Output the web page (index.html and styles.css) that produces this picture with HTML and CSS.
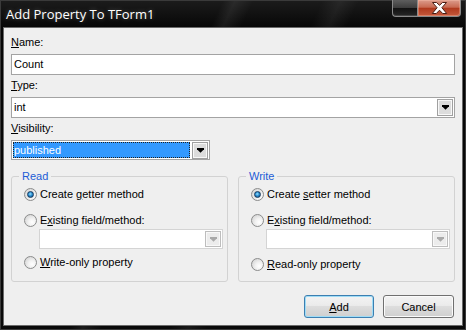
FILE: index.html
```html
<!DOCTYPE html>
<html lang="en">
<head>
  <meta charset="UTF-8">
  <title>Add Property To TForm1</title>
  <link rel="stylesheet" href="styles.css">
</head>
<body>
  <div class="window">
    <div class="titlebar">
      <span class="title">Add Property To TForm1</span>
      <div class="caption">
        <span class="cap-btn cap-min"></span>
        <span class="cap-btn cap-close">
          <svg width="17" height="12" viewBox="0 0 17 12"><path d="M1.5 0.5h4l3 2.8 3-2.8h4l-4.6 5.2 4.8 5.8h-4l-3.2-3.3-3.2 3.3h-4l4.8-5.8z" fill="#fff" stroke="#4a1e14" stroke-width="1"/></svg>
        </span>
      </div>
    </div>

    <div class="client">
      <label class="field-label first"><u>N</u>ame:</label>
      <div class="edit">Count</div>

      <label class="field-label"><u>T</u>ype:</label>
      <div class="combo">
        <span class="combo-text">int</span>
        <span class="drop-btn"><svg width="7" height="5" viewBox="0 0 7 5"><path d="M0 0h7v1.2l-3.5 3.5-3.5-3.5z" fill="#000"/></svg></span>
      </div>

      <label class="field-label"><u>V</u>isibility:</label>
      <div class="combo combo-vis">
        <span class="combo-text selected">published</span>
        <span class="drop-btn"><svg width="7" height="5" viewBox="0 0 7 5"><path d="M0 0h7v1.2l-3.5 3.5-3.5-3.5z" fill="#000"/></svg></span>
      </div>

      <div class="groups">
        <fieldset class="group">
          <legend>Read</legend>
          <div class="option checked"><span class="radio"></span><span>Create <u>g</u>etter method</span></div>
          <div class="option spaced"><span class="radio"></span><span>E<u>x</u>isting field/method:</span></div>
          <div class="combo combo-disabled">
            <span class="combo-text"></span>
            <span class="drop-btn"><svg width="7" height="5" viewBox="0 0 7 5"><path d="M0 0h7v1.2l-3.5 3.5-3.5-3.5z" fill="#a9a9a9"/></svg></span>
          </div>
          <div class="option last"><span class="radio"></span><span><u>W</u>rite-only property</span></div>
        </fieldset>

        <fieldset class="group">
          <legend>Write</legend>
          <div class="option checked"><span class="radio"></span><span>Create <u>s</u>etter method</span></div>
          <div class="option spaced"><span class="radio"></span><span>E<u>x</u>isting field/method:</span></div>
          <div class="combo combo-disabled">
            <span class="combo-text"></span>
            <span class="drop-btn"><svg width="7" height="5" viewBox="0 0 7 5"><path d="M0 0h7v1.2l-3.5 3.5-3.5-3.5z" fill="#a9a9a9"/></svg></span>
          </div>
          <div class="option last lower"><span class="radio"></span><span><u>R</u>ead-only property</span></div>
        </fieldset>
      </div>

      <div class="buttons">
        <button class="btn btn-default"><u>A</u>dd</button>
        <button class="btn btn-cancel">Cancel</button>
      </div>
    </div>
  </div>
</body>
</html>
```

FILE: styles.css
```css
body{
  margin: 0;
  background: #fff;
}
.window{
  width: 466px;
  height: 330px;
  box-sizing: border-box;
  padding: 0 3px 4px;
  display: flex;
  flex-direction: column;
  background:
    linear-gradient(115deg, transparent 36%, rgba(255,255,255,0.07) 38%, transparent 41%),
    linear-gradient(115deg, transparent 52%, rgba(255,255,255,0.06) 55%, transparent 58%),
    linear-gradient(#1c1c1c, #050505 30px, #0a0a0a);
  box-shadow: inset 0 0 0 1px #3a3a3a;
  font-family: "Liberation Sans", Arial, sans-serif;
  font-size: 11px;
  color: #000;
}
.titlebar{
  height: 27px;
  flex: none;
  display: flex;
  justify-content: space-between;
  align-items: flex-start;
}
.title{
  font-family: "Open Sans", "Noto Sans", sans-serif;
  font-size: 13px;
  line-height: 18px;
  padding: 5px 0 0 3px;
  color: #fff;
  text-shadow: 0 0 5px rgba(255,255,255,0.3);
}
.caption{
  display: flex;
  margin-right: 2px;
}
.cap-btn{
  height: 17px;
  box-sizing: border-box;
  border: 1px solid #8a8a8a;
  border-top: none;
}
.cap-min{
  width: 25px;
  border-right: none;
  border-radius: 0 0 0 4px;
  background: linear-gradient(#5e5e5e, #3c3c3c 50%, #121212 52%, #262626);
  box-shadow: inset 0 -1px 0 #444;
}
.cap-close{
  width: 44px;
  border-radius: 0 0 4px 0;
  display: flex;
  align-items: center;
  justify-content: center;
  background: linear-gradient(#dc9c8c, #c86a52 45%, #b03a1e 52%, #c4593c);
  box-shadow: inset 0 0 0 1px rgba(255,200,180,0.35);
}
.client{
  flex: 1;
  background: #efefef;
  border: 1px solid #6a6a6a;
  padding: 8px 7px 0;
}
.field-label{
  display: block;
  line-height: 13px;
  margin: 4px 0 5px;
}
.field-label.first{
  margin-top: 0;
}
.edit{
  height: 21px;
  box-sizing: border-box;
  border: 1px solid #a3a3a3;
  background: #fff;
  padding-left: 2px;
  line-height: 19px;
}
.combo{
  height: 21px;
  box-sizing: border-box;
  border: 1px solid #a3a3a3;
  background: #fff;
  display: flex;
  align-items: center;
}
.combo-text{
  flex: 1;
  padding-left: 2px;
  line-height: 19px;
}
.drop-btn{
  width: 16px;
  height: 17px;
  margin-right: 1px;
  box-sizing: border-box;
  border: 1px solid #a0a0a0;
  box-shadow: inset 0 0 0 1px #f8f8f8;
  background: #dcdcdc;
  display: flex;
  align-items: center;
  justify-content: center;
}
.combo-vis{
  width: 199px;
  height: 20px;
}
.combo-text.selected{
  height: 16px;
  line-height: 16px;
  margin: 0 2px 0 1px;
  padding-left: 1px;
  background: #3399ff;
  color: #fff;
  outline: 1px dotted #222;
  outline-offset: -1px;
}
.groups{
  display: flex;
  gap: 10px;
  margin-top: 10px;
}
.group{
  flex: 1;
  min-width: 0;
  margin: 0;
  padding: 5px 4px 10px 12px;
  border: 1px solid #d2d2d2;
  border-radius: 3px;
}
.group legend{
  margin-left: -5px;
  padding: 0 3px;
  line-height: 13px;
  color: #1d5cd6;
}
.option{
  display: flex;
  align-items: center;
  height: 13px;
  line-height: 13px;
}
.option.spaced{
  margin-top: 13px;
}
.option.last{
  margin-top: 7px;
}
.option.last.lower{
  margin-top: 9px;
}
.radio{
  position: relative;
  flex: none;
  width: 13px;
  height: 13px;
  box-sizing: border-box;
  margin-right: 3px;
  border: 1px solid #8b8c8c;
  border-radius: 50%;
  background: radial-gradient(circle at 65% 65%, #ffffff 0, #f2f2f2 35%, #cbcbcb 100%);
}
.checked .radio::after{
  content: "";
  position: absolute;
  left: 2px;
  top: 2px;
  width: 7px;
  height: 7px;
  box-sizing: border-box;
  border: 1px solid #173a5e;
  border-radius: 50%;
  background: radial-gradient(circle at 45% 40%, #9be4ff 0, #2c8fd2 45%, #0e4777 100%);
}
.combo-disabled{
  height: 20px;
  margin: 2px 0 0 15px;
  border-color: #d4d4d4;
}
.combo-disabled .drop-btn{
  height: 16px;
  border-color: #bdbdbd;
  background: #ececec;
}
.buttons{
  display: flex;
  justify-content: flex-end;
  gap: 9px;
  margin: 13px 1px 0 0;
}
.btn{
  width: 70px;
  height: 23px;
  box-sizing: border-box;
  padding: 0;
  border: 1px solid #707070;
  border-radius: 3px;
  background: linear-gradient(#f3f3f3, #ebebeb 45%, #dddddd 50%, #cfcfcf);
  box-shadow: inset 0 0 0 1px #fbfbfb;
  font-family: "Liberation Sans", Arial, sans-serif;
  font-size: 11px;
  color: #000;
}
.btn-default{
  border-color: #3c7fb1;
  box-shadow: inset 0 0 0 1px #9fdcf6;
}
.btn-cancel{
  width: 71px;
}
```
